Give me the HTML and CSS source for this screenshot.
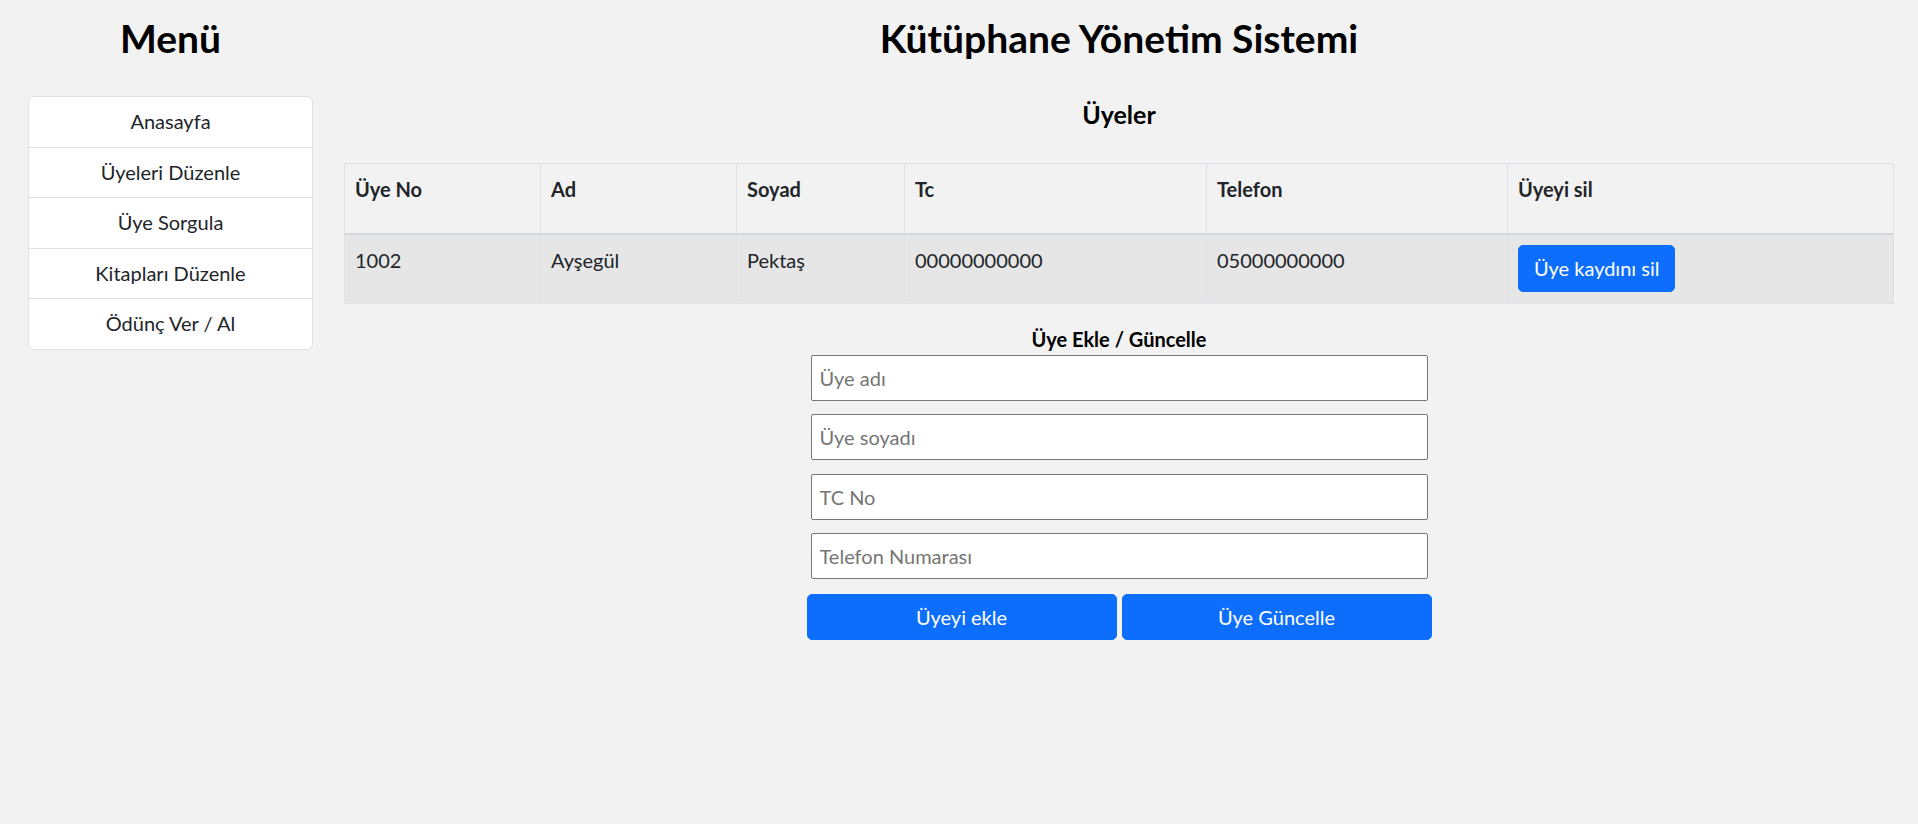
FILE: index.html
```html
<!DOCTYPE html>
<html lang="tr">
<head>
<meta charset="utf-8">
<title>Kütüphane Yönetim Sistemi</title>
<link rel="stylesheet" href="styles.css">
</head>
<body>
<div class="layout">
  <aside class="sidebar">
    <h1 class="page-title">Menü</h1>
    <ul class="menu">
      <li class="menu-item">Anasayfa</li>
      <li class="menu-item">Üyeleri Düzenle</li>
      <li class="menu-item">Üye Sorgula</li>
      <li class="menu-item">Kitapları Düzenle</li>
      <li class="menu-item">Ödünç Ver / Al</li>
    </ul>
  </aside>
  <main class="main">
    <h1 class="page-title">Kütüphane Yönetim Sistemi</h1>
    <h2 class="section-title">Üyeler</h2>
    <table class="members">
      <colgroup>
        <col class="c-no"><col class="c-ad"><col class="c-soyad"><col class="c-tc"><col class="c-tel"><col class="c-sil">
      </colgroup>
      <thead>
        <tr>
          <th>Üye No</th><th>Ad</th><th>Soyad</th><th>Tc</th><th>Telefon</th><th>Üyeyi sil</th>
        </tr>
      </thead>
      <tbody>
        <tr>
          <td>1002</td><td>Ayşegül</td><td>Pektaş</td><td>00000000000</td><td>05000000000</td>
          <td><button class="btn btn-small">Üye kaydını sil</button></td>
        </tr>
      </tbody>
    </table>
    <form class="member-form">
      <div class="form-title">Üye Ekle / Güncelle</div>
      <input class="field" type="text" placeholder="Üye adı">
      <input class="field" type="text" placeholder="Üye soyadı">
      <input class="field" type="text" placeholder="TC No">
      <input class="field" type="text" placeholder="Telefon Numarası">
      <div class="form-actions">
        <button type="button" class="btn btn-wide">Üyeyi ekle</button>
        <button type="button" class="btn btn-wide">Üye Güncelle</button>
      </div>
    </form>
  </main>
</div>
</body>
</html>
```
FILE: styles.css
```css
* { box-sizing: border-box; }
html, body { margin: 0; padding: 0; }
body {
  background: #f2f2f2;
  font-family: Lato, "Open Sans", sans-serif;
  font-size: 20px;
  line-height: 30px;
  color: #212529;
}
.layout {
  display: flex;
  gap: 31px;
  padding: 0 24px 0 28px;
}
.sidebar { width: 285px; flex: none; }
.main { flex: 1; display: flex; flex-direction: column; align-items: center; }
.page-title {
  margin: 14px 0 0;
  font-size: 39px;
  line-height: 48px;
  font-weight: 700;
  color: #000;
  text-align: center;
}
.menu {
  list-style: none;
  margin: 34px 0 0;
  padding: 0;
  background: #fff;
  border: 1px solid #dfdfdf;
  border-radius: 6px;
}
.menu-item {
  text-align: center;
  padding: 9px 20px 11px;
  height: 50.5px;
  border-top: 1px solid #dfdfdf;
}
.menu-item:first-child { border-top: 0; height: 49.5px; }
.section-title {
  margin: 37px 0 0;
  font-size: 25px;
  line-height: 30px;
  font-weight: 700;
  color: #000;
}
.members {
  width: 100%;
  margin-top: 34px;
  border-collapse: collapse;
  table-layout: fixed;
}
.c-no { width: 196px; }
.c-ad { width: 196px; }
.c-soyad { width: 168px; }
.c-tc { width: 302px; }
.c-tel { width: 301px; }
.members th, .members td {
  border: 1px solid #dee2e6;
  padding: 10px;
  text-align: left;
  vertical-align: top;
}
.members th {
  height: 70px;
  font-weight: 700;
  border-bottom: 2px solid #d3d8dd;
}
.members td { background: #e6e6e6; height: 70px; }
.btn {
  font-family: inherit;
  font-size: 20px;
  line-height: 30px;
  color: #fff;
  background: #0d6efd;
  border: 1px solid #0d6efd;
  border-radius: 5px;
  cursor: pointer;
}
.btn-small { padding: 7.5px 15px; }
.member-form {
  width: 625px;
  margin-top: 20px;
  display: flex;
  flex-direction: column;
  align-items: center;
}
.form-title {
  font-weight: 700;
  color: #000;
  margin-bottom: 1px;
}
.field {
  width: 617px;
  height: 46px;
  margin-bottom: 13.3px;
  padding: 0 8px;
  font-family: inherit;
  font-size: 20px;
  border: 1px solid #767676;
  border-radius: 2px;
  background: #fff;
  color: #212529;
}
.field::placeholder { color: #757575; }
.form-actions {
  width: 100%;
  display: flex;
  gap: 5px;
  margin-top: 2px;
}
.btn-wide { flex: 1; height: 46px; padding: 0 15px; }
```
